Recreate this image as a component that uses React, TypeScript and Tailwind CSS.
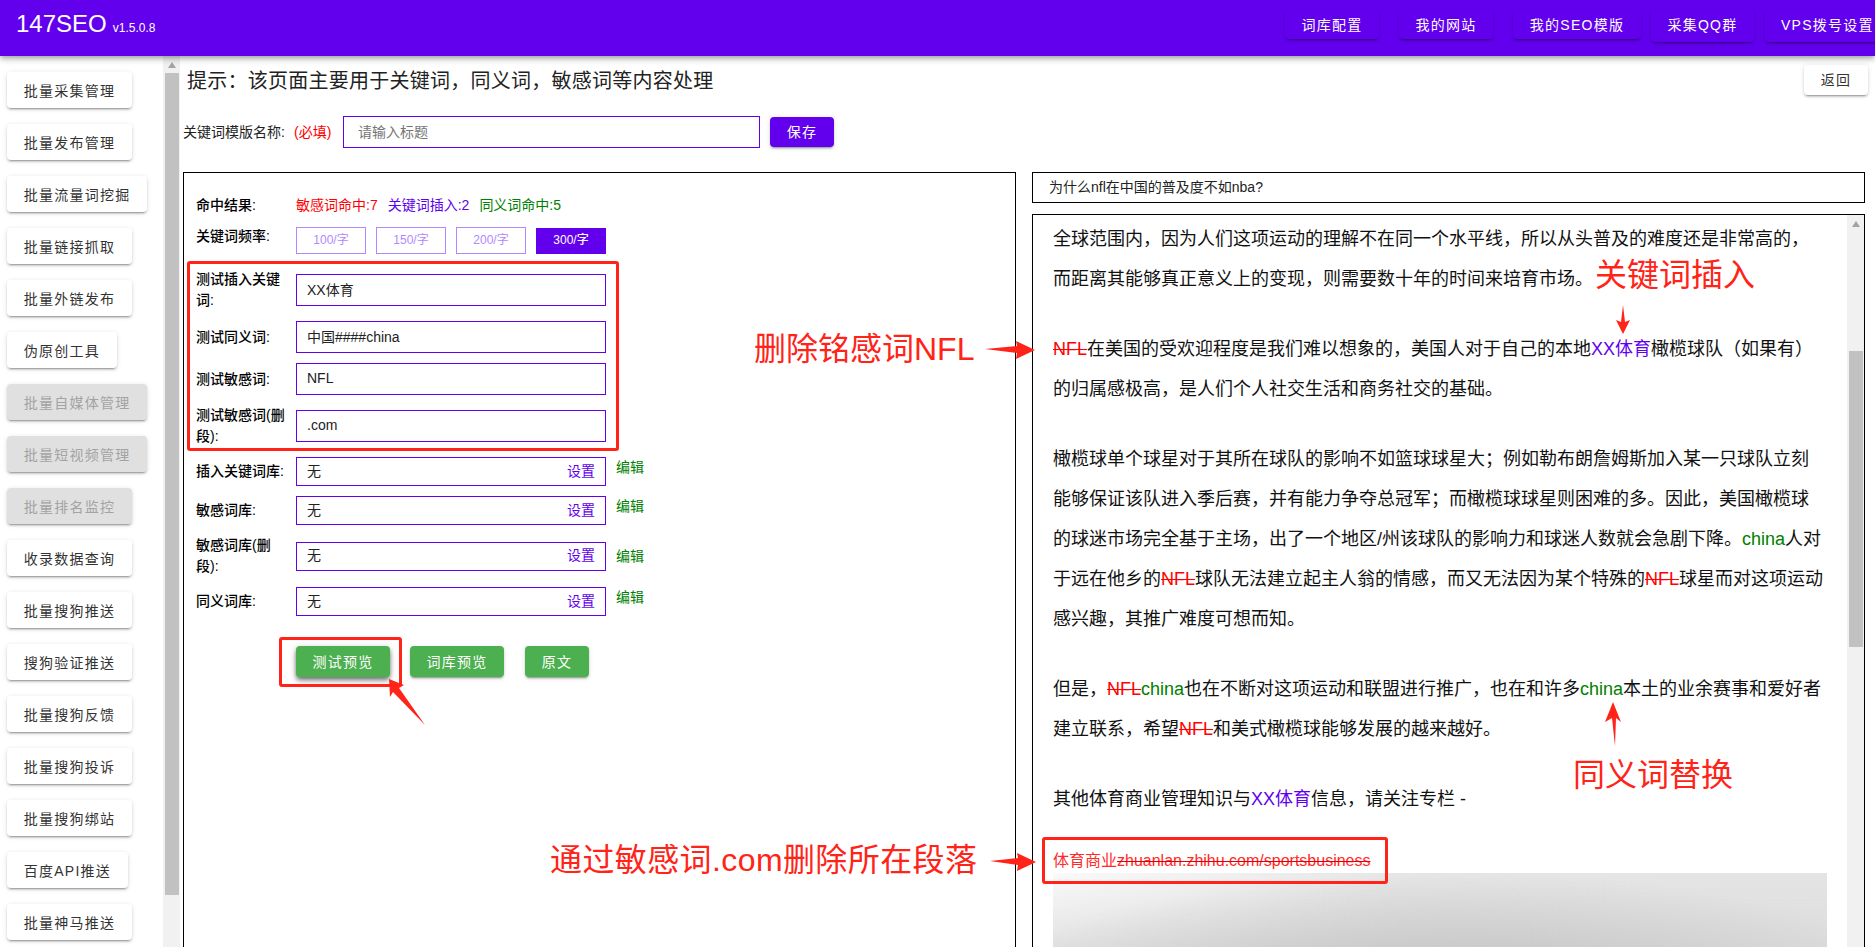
import React from "react";

const raised =
  "shadow-[0_3px_1px_-2px_rgba(0,0,0,0.2),0_2px_2px_0_rgba(0,0,0,0.14),0_1px_5px_0_rgba(0,0,0,0.12)]";

const sideItems: [string, boolean][] = [
  ["批量采集管理", false],
  ["批量发布管理", false],
  ["批量流量词挖掘", false],
  ["批量链接抓取", false],
  ["批量外链发布", false],
  ["伪原创工具", false],
  ["批量自媒体管理", true],
  ["批量短视频管理", true],
  ["批量排名监控", true],
  ["收录数据查询", false],
  ["批量搜狗推送", false],
  ["搜狗验证推送", false],
  ["批量搜狗反馈", false],
  ["批量搜狗投诉", false],
  ["批量搜狗绑站", false],
  ["百度API推送", false],
  ["批量神马推送", false],
];

function ArrowUp({ className }: { className: string }) {
  return (
    <svg className={className} width="8" height="6" viewBox="0 0 8 6">
      <path d="M4 0 L8 6 L0 6 Z" fill="#a3a3a3" />
    </svg>
  );
}

function NavBtn({ label, w, h, left }: { label: string; w: string; h: string; left?: boolean }) {
  return (
    <div
      className={`${w} ${h} shrink-0 rounded bg-[#6200ee] ${left ? "text-left pl-4" : "text-center"} text-white text-sm leading-[32px] tracking-[1.25px] whitespace-nowrap ${raised}`}
    >
      {label}
    </div>
  );
}

function Field({ label, value }: { label: string; value: string }) {
  return (
    <div className="flex items-center mb-[10px]">
      <div className="w-[90px] mr-[10px] text-sm leading-[21px] font-medium text-black">{label}</div>
      <input
        readOnly
        value={value}
        className="w-[310px] h-8 border border-[#6200ee] pl-[10px] pb-[2px] text-[14px] text-[#222] outline-none"
      />
    </div>
  );
}

function LibField({ label, high }: { label: string; high?: boolean }) {
  return (
    <div className="flex items-center mb-[10px]">
      <div className="w-[90px] mr-[10px] text-sm leading-[21px] font-medium text-black">{label}</div>
      <div className="w-[310px] h-[29px] border border-[#6200ee] pl-[10px] pr-[10px] pb-[2px] flex items-center justify-between text-sm">
        <span className="text-[#222]">无</span>
        <span className="text-[#6200ee]">设置</span>
      </div>
      <span className={`ml-[10px] text-sm text-[#008000] ${high ? "" : "-mt-[9px]"}`}>编辑</span>
    </div>
  );
}

const No = () => <span className="text-[#ff0000] line-through">NFL</span>;
const Kw = () => <span className="text-[#6200ee]">XX体育</span>;
const Cn = () => <span className="text-[#008000]">china</span>;

export default function App() {
  return (
    <div className="relative w-[1875px] h-[947px] overflow-hidden bg-white text-black [font-family:'Liberation_Sans','Noto_Sans_CJK_SC',sans-serif]">
      <header className="relative z-10 h-14 bg-[#6200ee] flex overflow-hidden shadow-[0_2px_4px_-1px_rgba(0,0,0,0.2),0_4px_5px_0_rgba(0,0,0,0.14),0_1px_10px_0_rgba(0,0,0,0.12)]">
        <div className="w-[1285px] shrink-0 pl-4 pt-[10px] text-white flex items-baseline">
          <span className="text-2xl leading-7">147SEO</span>
          <span className="ml-[6px] text-xs font-medium">v1.5.0.8</span>
        </div>
        <nav className="flex items-start pt-[9px]">
          <NavBtn label="词库配置" w="w-[94px]" h="h-[30px]" />
          <div className="w-5 shrink-0" />
          <NavBtn label="我的网站" w="w-[94px]" h="h-[30px]" />
          <div className="w-5 shrink-0" />
          <NavBtn label="我的SEO模版" w="w-[128px]" h="h-[30px]" />
          <div className="w-[10px] shrink-0" />
          <NavBtn label="采集QQ群" w="w-[103px]" h="h-[33px]" />
          <div className="w-[11px] shrink-0" />
          <NavBtn label="VPS拨号设置" w="w-[125px]" h="h-[33px]" left />
        </nav>
      </header>

      <div className="flex h-[891px]">
        <aside className="w-[180px] shrink-0 flex">
          <div className="w-[163px] pt-4 pl-[7px] flex flex-col items-start gap-4">
            {sideItems.map(([t, off]) => (
              <div
                key={t}
                className={`h-9 shrink-0 rounded px-[16.75px] text-sm leading-[38px] tracking-[1.25px] whitespace-nowrap ${raised} ${
                  off ? "bg-[#e0e0e0] text-[#a3a3a3]" : "bg-white text-[#333]"
                }`}
              >
                {t}
              </div>
            ))}
          </div>
          <div className="w-[17px] bg-[#f1f1f1] flex flex-col items-center">
            <div className="h-[17px] w-full flex items-center justify-center">
              <ArrowUp className="block" />
            </div>
            <div className="w-[14px] h-[822px] bg-[#c1c1c1]" />
          </div>
        </aside>

        <main className="flex-1 min-w-0 pl-[3px] pr-[10px]">
          <div className="flex items-start justify-between pt-[9px] pl-1">
            <div className="text-xl leading-8 tracking-[0.25px] text-[#222] -mb-[2px]">提示：该页面主要用于关键词，同义词，敏感词等内容处理</div>
            <div className={`h-[30px] w-[64px] -mr-[3px] rounded bg-white text-center text-sm leading-[31px] tracking-[1.25px] text-[#333] ${raised}`}>
              返回
            </div>
          </div>

          <div className="flex items-center mt-[21px]">
            <span className="text-sm text-[#222] w-[111px] whitespace-nowrap">关键词模版名称:</span>
            <span className="text-sm text-[#ff0000] w-[49px] whitespace-nowrap">(必填)</span>
            <input
              readOnly
              placeholder="请输入标题"
              className="w-[417px] h-8 border border-[#6200ee] pl-[14px] text-sm outline-none placeholder:text-[#757575]"
            />
            <div className={`ml-[10px] w-16 h-[30px] rounded bg-[#6200ee] text-center text-white text-sm leading-[31px] tracking-[1.25px] ${raised}`}>
              保存
            </div>
          </div>

          <div className="flex gap-4 mt-6 items-start">
            <section className="w-[833px] h-[800px] shrink-0 border border-black pl-3 pt-[22px]">
              <div className="flex text-sm leading-[21px]">
                <div className="w-[90px] mr-[10px] font-medium">命中结果:</div>
                <span className="text-[#ff0000]">敏感词命中:7</span>
                <span className="ml-[10px] text-[#6200ee]">关键词插入:2</span>
                <span className="ml-[10px] text-[#008000]">同义词命中:5</span>
              </div>

              <div className="flex mt-[10px] mb-[15px] items-start">
                <div className="w-[90px] mr-[10px] text-sm leading-[21px] font-medium">关键词频率:</div>
                <div className="flex gap-[10px] mt-px">
                  {["100/字", "150/字", "200/字"].map((t) => (
                    <div key={t} className="w-[70px] h-[27px] border border-[#b388ff] text-center text-xs leading-[25px] text-[#b388ff]">
                      {t}
                    </div>
                  ))}
                  <div className="w-[70px] h-[26px] mt-px bg-[#6200ee] text-center text-xs leading-[25px] font-medium text-white">300/字</div>
                </div>
              </div>

              <Field label="测试插入关键词:" value="XX体育" />
              <Field label="测试同义词:" value="中国####china" />
              <Field label="测试敏感词:" value="NFL" />
              <Field label="测试敏感词(删段):" value=".com" />
              <LibField label="插入关键词库:" />
              <LibField label="敏感词库:" />
              <LibField label="敏感词库(删段):" high />
              <LibField label="同义词库:" />

              <div className="flex pl-[100px] mt-[30px] text-white text-sm tracking-[1.25px]">
                <div className="w-[94px] h-[31px] rounded bg-[#4caf50] text-center leading-[32px] shadow-[0_2px_4px_-1px_rgba(0,0,0,0.4),0_4px_5px_0_rgba(0,0,0,0.3),0_1px_10px_0_rgba(0,0,0,0.12)]">
                  测试预览
                </div>
                <div className={`w-[94px] h-[31px] ml-5 rounded bg-[#4caf50] text-center leading-[32px] ${raised}`}>词库预览</div>
                <div className={`w-16 h-[31px] ml-[21px] rounded bg-[#4caf50] text-center leading-[32px] ${raised}`}>原文</div>
              </div>
            </section>

            <section className="w-[833px] shrink-0">
              <div className="h-[31px] border border-black pl-4 text-sm leading-[29px] text-[#222]">
                为什么nfl在中国的普及度不如nba?
              </div>
              <div className="mt-[11px] h-[800px] border border-black flex">
                <div className="w-[815px] pl-5 pr-5 pt-1 text-lg leading-10 text-[#111]">
                  <div className="pr-[4px]">
                    <p className="mb-[30px]">
                      全球范围内，因为人们这项运动的理解不在同一个水平线，所以从头普及的难度还是非常高的，而距离其能够真正意义上的变现，则需要数十年的时间来培育市场。
                    </p>
                    <p className="mb-[30px]">
                      <No />在美国的受欢迎程度是我们难以想象的，美国人对于自己的本地<Kw />橄榄球队（如果有）的归属感极高，是人们个人社交生活和商务社交的基础。
                    </p>
                    <p className="mb-[30px]">
                      橄榄球单个球星对于其所在球队的影响不如篮球球星大；例如勒布朗詹姆斯加入某一只球队立刻能够保证该队进入季后赛，并有能力争夺总冠军；而橄榄球球星则困难的多。因此，美国橄榄球的球迷市场完全基于主场，出了一个地区/州该球队的影响力和球迷人数就会急剧下降。<Cn />人对于远在他乡的<No />球队无法建立起主人翁的情感，而又无法因为某个特殊的<No />球星而对这项运动感兴趣，其推广难度可想而知。
                    </p>
                    <p className="mb-[30px]">
                      但是，<No /><Cn />也在不断对这项运动和联盟进行推广，也在和许多<Cn />本土的业余赛事和爱好者建立联系，希望<No />和美式橄榄球能够发展的越来越好。
                    </p>
                    <p className="mb-[30px]">
                      其他体育商业管理知识与<Kw />信息，请关注专栏 -
                    </p>
                  </div>
                  <p className="text-base leading-6 text-[#ff2a2a]">
                    体育商业<span className="line-through decoration-[#e00000]">zhuanlan.zhihu.com/sportsbusiness</span>
                  </p>
                  <div className="h-[100px] bg-[radial-gradient(ellipse_480px_120px_at_400px_120px,#c0c0c0,rgba(192,192,192,0)),linear-gradient(180deg,rgba(224,224,224,0),rgba(218,218,218,1)),linear-gradient(90deg,#fafafa,#e6e6e6_45%,#e4e4e4)]" />
                </div>
                <div className="w-[17px] bg-[#f1f1f1] flex flex-col items-center">
                  <div className="h-[17px] w-full flex items-center justify-center">
                    <ArrowUp className="block" />
                  </div>
                  <div className="h-[119px] w-full bg-[#f1f1f1]" />
                  <div className="w-[14px] h-[296px] bg-[#c1c1c1]" />
                </div>
              </div>
            </section>
          </div>
        </main>
      </div>

      {/* screenshot annotations lying over the page */}
      <div className="absolute left-[187px] top-[261px] w-[432px] h-[190px] border-[3px] border-[#ff2318] rounded-[3px]" />
      <div className="absolute left-[279px] top-[637px] w-[123px] h-[50px] border-[3px] border-[#ff2318] rounded-[3px]" />
      <div className="absolute left-[1042px] top-[837px] w-[346px] h-[47px] border-[3px] border-[#ff2318] rounded-[3px]" />

      <div className="absolute left-[754px] top-[329px] text-[32px] leading-10 text-[#ff2318] whitespace-nowrap">删除铭感词NFL</div>
      <div className="absolute left-[1595px] top-[255px] text-[32px] leading-10 text-[#ff2318] whitespace-nowrap">关键词插入</div>
      <div className="absolute left-[1573px] top-[755px] text-[32px] leading-10 text-[#ff2318] whitespace-nowrap">同义词替换</div>
      <div className="absolute left-[550px] top-[840px] text-[32px] leading-10 tracking-[0.4px] text-[#ff2318] whitespace-nowrap">通过敏感词.com删除所在段落</div>

      <svg className="absolute left-0 top-0 pointer-events-none" width="1875" height="947" viewBox="0 0 1875 947">
        <g fill="#ff2318">
          <polygon points="985,349 1017,346 1016,341 1035,350 1016,359 1017,353" />
          <polygon points="990,861 1018,858 1017,853 1036,862 1017,871 1018,865" />
          <polygon points="1623,305 1625,322 1630,320 1623,334 1616,320 1621,322" />
          <polygon points="1613,702 1621,722 1616,718 1615,746 1612,718 1605,722" />
          <polygon points="389,679 404,685 399,688 425,725 393,692 390,697" />
        </g>
      </svg>
    </div>
  );
}
